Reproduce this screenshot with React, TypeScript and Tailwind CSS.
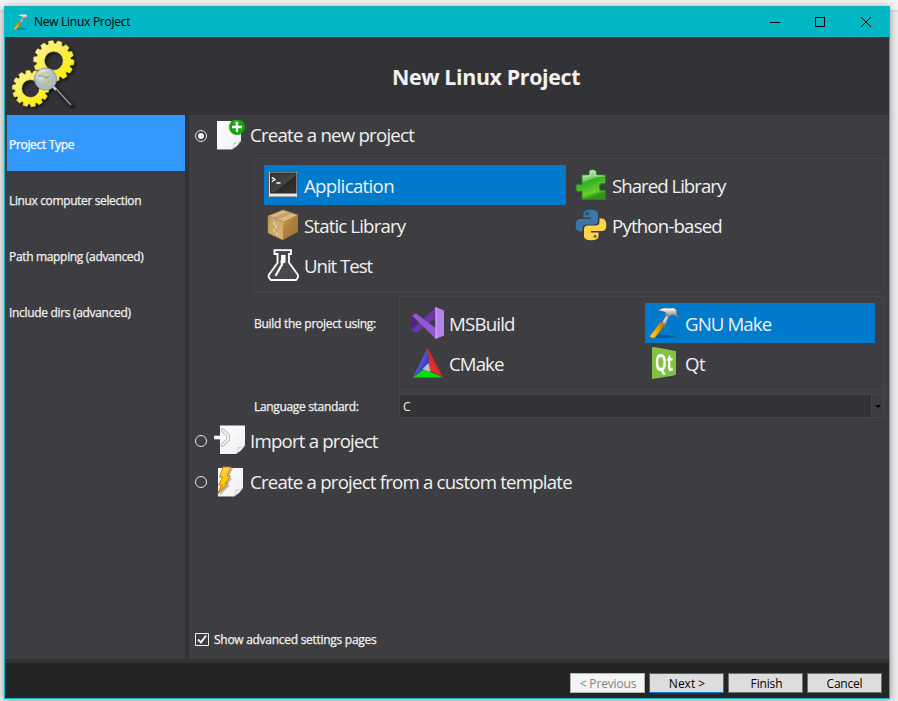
import React from "react";

type IconProps = { className?: string };

function Hammer({ className = "w-8 h-8" }: IconProps) {
  return (
    <svg viewBox="0 0 32 32" className={className}>
      <defs>
        <linearGradient id="hHandle" x1="0" x2="1"><stop offset="0" stopColor="#ffd640" /><stop offset="0.55" stopColor="#eda500" /><stop offset="1" stopColor="#976000" /></linearGradient>
        <linearGradient id="hHead" x1="0" y1="0" x2="0" y2="1"><stop offset="0" stopColor="#ffffff" /><stop offset="1" stopColor="#777" /></linearGradient>
      </defs>
      <path d="M4 31 12 27.5 29 29Q24 31.5 4 31Z" fill="#003460" opacity=".4" />
      <path d="M15.5 13 19 15 16 20 12.5 17.5Z" fill="#a5aaad" stroke="#666" strokeWidth=".4" />
      <path d="M12.2 15.5 17 18 7.2 30.5 Q5 32.5 1.5 29.5Z" fill="url(#hHandle)" stroke="#946400" strokeWidth=".5" />
      <path d="M14.5 14.5 18.5 7.5 21 9 17.5 16Z" fill="#d0d2d5" stroke="#666" strokeWidth=".4" />
      <path d="M10 3.5Q14 .2 19 1.2L26 1 28.5 3.2 28.6 7 31 10.2 28 9.2Q25 7 22.5 8.4L22 10 17.5 8.5 17.8 5.6Q14.5 3.8 10 3.5Z" fill="url(#hHead)" stroke="#666" strokeWidth=".5" />
      <path d="M13 2.8Q17 1.3 21 3L26 2.5" fill="none" stroke="#fff" strokeWidth=".9" />
    </svg>
  );
}

function gearPath(cx: number, cy: number, r: number, hole: number) {
  const n = 14;
  const pts: string[] = [];
  for (let i = 0; i < n; i++) {
    const a = (i * 2 * Math.PI) / n + 0.08;
    const at = (rr: number, d: number) =>
      `${(cx + rr * Math.cos(a + d)).toFixed(2)} ${(cy + rr * Math.sin(a + d)).toFixed(2)}`;
    pts.push(at(r * 0.84, -0.17), at(r, -0.11), at(r, 0.11), at(r * 0.84, 0.17));
  }
  return `M${pts.join("L")}ZM${cx - hole} ${cy}a${hole} ${hole} 0 1 0 ${2 * hole} 0a${hole} ${hole} 0 1 0 ${-2 * hole} 0Z`;
}

function GearsLogo() {
  return (
    <svg viewBox="0 0 72 72" className="h-[72px] w-[72px]">
      <defs>
        <linearGradient id="gear" x1="0" y1="0" x2=".8" y2="1"><stop offset="0" stopColor="#fff5a0" /><stop offset=".5" stopColor="#f8ef50" /><stop offset="1" stopColor="#ffed00" /></linearGradient>
        <radialGradient id="lens" cx=".35" cy=".25"><stop offset="0" stopColor="#eef0e5" /><stop offset="1" stopColor="#aabcc5" /></radialGradient>
        <filter id="gearShade"><feDropShadow dx="2" dy="2" stdDeviation="1.5" floodOpacity=".65" /></filter>
      </defs>
      <g filter="url(#gearShade)">
        <path d={gearPath(44.7, 23.8, 20.2, 9.5)} fill="url(#gear)" stroke="#efe45d" strokeWidth=".5" fillRule="evenodd" />
        <path d={gearPath(21.5, 51.5, 18.2, 9)} fill="url(#gear)" stroke="#efe45d" strokeWidth=".5" fillRule="evenodd" />
        <path d="M45 50 63 69.5" stroke="#282828" strokeWidth="4.5" />
        <path d="M44.5 49 62 68" stroke="#999" strokeWidth="1.3" />
        <path d="M42 47.5 47 53" stroke="#d2d2d2" strokeWidth="2" />
        <circle cx="36.5" cy="42" r="11" fill="url(#lens)" stroke="#8d989c" strokeWidth="1" />
        <path d="M29 37q8-5 12-1l-3 5 6 3-1 3q-7 3-10-3l3-4-6-1Z" fill="#c3c28b" opacity=".6" />
        <path d="M29 39h5l3 2 4-2" fill="none" stroke="#8c9ba1" strokeWidth="1.2" />
      </g>
    </svg>
  );
}

function PageSheet({ x = 1, w = 26 }: { x?: number; w?: number }) {
  const r = x + w;
  return (
    <g>
      <defs>
        <linearGradient id="paper" x1="0" y1="0" x2="1" y2="1"><stop offset="0" stopColor="#fff" /><stop offset=".8" stopColor="#f2f2f2" /><stop offset="1" stopColor="#ddd" /></linearGradient>
        <linearGradient id="curl" x1="0" y1="0" x2="1" y2="1"><stop offset="0" stopColor="#888" /><stop offset=".45" stopColor="#fff" /><stop offset="1" stopColor="#999" /></linearGradient>
      </defs>
      <path d={`M${x} 3H${r}V23L${r - 9} 31.5H${x}Z`} fill="#222" opacity=".4" />
      <path d={`M${x} 2H${r}V22L${r - 9} 30.5H${x}Z`} fill="url(#paper)" />
      <path d={`M${r - 9} 30.5Q${r - 6.5} 27 ${r - 7} 24Q${r - 3} 24.5 ${r} 22L${r - 4} 27Z`} fill="url(#curl)" stroke="#aaa" strokeWidth=".4" />
    </g>
  );
}

function NewPage() {
  return (
    <svg viewBox="0 0 32 32" className="h-8 w-8">
      <defs>
        <radialGradient id="plusGreen" cx=".45" cy=".25"><stop offset="0" stopColor="#54d449" /><stop offset=".5" stopColor="#159e12" /><stop offset="1" stopColor="#10a90e" /></radialGradient>
      </defs>
      <g transform="translate(0 -1)"><PageSheet x={3} w={24} /></g>
      <circle cx="23" cy="7" r="7.8" fill="url(#plusGreen)" stroke="#1e851b" strokeWidth=".5" />
      <path d="M23 2v10M18 7h10" stroke="#fff" strokeWidth="2.3" />
    </svg>
  );
}

function ImportPage() {
  return (
    <svg viewBox="0 1.5 32 32" className="h-8 w-8">
      <PageSheet x={6} w={25} />
      <path d="M8.5 6.5 14 12V16L8.5 21.5" fill="none" stroke="#aaa" strokeWidth="3.8" strokeLinecap="round" />
      <path d="M8.5 6.5 14 12V16L8.5 21.5" fill="none" stroke="#f2f2f2" strokeWidth="2.2" strokeLinecap="round" />
      <path d="M0 14H12" stroke="#fff" strokeWidth="3.6" />
    </svg>
  );
}

function TemplatePage() {
  return (
    <svg viewBox="0 0 32 32" className="h-8 w-8">
      <defs><linearGradient id="bolt" x1="0" y1="0" x2="0" y2="1"><stop offset="0" stopColor="#ffd34a" /><stop offset=".6" stopColor="#ffc600" /><stop offset="1" stopColor="#e87b00" /></linearGradient></defs>
      <PageSheet x={4} w={25} />
      <path d="M8.5 1.5H17L12 11H16.5L11 18H14L3 29.5 7 19.5H4L8 11H4.5Z" fill="#444" opacity=".35" transform="translate(2 1)" />
      <path d="M9 1H17L13 10H16.5L11 17.5H14L3.5 28.5 7.5 19H4.5L8.5 11H5.5Z" fill="url(#bolt)" stroke="#bf7208" strokeWidth=".8" />
    </svg>
  );
}

function TerminalIcon() {
  return (
    <svg viewBox="0 0 32 32" className="h-8 w-8">
      <defs>
        <linearGradient id="screen" x1="0" y1="0" x2="1" y2="1"><stop offset="0" stopColor="#333" /><stop offset=".55" stopColor="#444" /><stop offset=".57" stopColor="#292929" /><stop offset="1" stopColor="#333" /></linearGradient>
        <linearGradient id="frame" x1="0" y1="0" x2="0" y2="1"><stop offset="0" stopColor="#c9c9c9" /><stop offset="1" stopColor="#eee" /></linearGradient>
      </defs>
      <rect x="1.5" y="2.5" width="29" height="26" rx="1" fill="url(#frame)" stroke="#5a5a5a" />
      <rect x="3.5" y="4" width="25.5" height="20" fill="url(#screen)" stroke="#292929" />
      <path d="M2.5 27.5h27" stroke="#a4a4a4" />
      <path d="M4.8 8.4 8 10.6 4.8 12.8M9.4 14H13.5" fill="none" stroke="#fff" strokeWidth="1.3" />
    </svg>
  );
}

function BoxIcon() {
  return (
    <svg viewBox="0 0 32 32" className="h-8 w-8">
      <defs>
        <linearGradient id="boxLeft" x1="0" y1="0" x2="1" y2="1"><stop offset="0" stopColor="#c59a57" /><stop offset="1" stopColor="#dcb775" /></linearGradient>
        <linearGradient id="boxRight" x1="0" y1="0" x2="1" y2="1"><stop offset="0" stopColor="#c49650" /><stop offset="1" stopColor="#986a2e" /></linearGradient>
      </defs>
      <path d="M1 7 16 1 31 6 17 13Z" fill="#dcb87c" stroke="#b9894a" strokeWidth=".5" />
      <path d="M1 7 17 13 16 31 1 24Z" fill="url(#boxLeft)" stroke="#b98b4b" strokeWidth=".5" />
      <path d="M17 13 31 6V23L16 31Z" fill="url(#boxRight)" />
      <path d="m7 9 16-6M8.5 10 25 4" stroke="#aa8553" strokeWidth=".7" />
      <path d="M5.5 9 10 11V14L11 24 8 26 7 15 5 14Z" fill="#bfae86" />
      <path d="M7 13v3m2 0v3m-2 1v3m3 0v3" stroke="#eee2c8" />
    </svg>
  );
}

function FlaskIcon() {
  return (
    <svg viewBox="0 0 32 32" className="h-8 w-8">
      <path d="M7.5 1.2H24V5H22V13.5L31 26V28.5L29 31H4L1.7 28.5V26L10.5 14V5H7.5Z" fill="#49494c" stroke="#fff" strokeWidth="1.8" />
      <path d="M14.5 12 15 15.5 9 26" fill="none" stroke="#fff" strokeWidth="2.2" strokeLinecap="round" />
      <path d="M14 6h4.5v7.5L14 15.5Z" fill="#fff" />
    </svg>
  );
}

function PuzzleIcon() {
  return (
    <svg viewBox="0 0 32 32" className="h-8 w-8">
      <defs><linearGradient id="puzzle" x1="0" y1="0" x2=".35" y2="1"><stop offset="0" stopColor="#c7f0bd" /><stop offset=".4" stopColor="#7bd471" /><stop offset=".48" stopColor="#34ad26" /><stop offset=".85" stopColor="#66d12b" /><stop offset="1" stopColor="#319217" /></linearGradient></defs>
      <path d="M7 6H12.5Q15.5 6 14 3.5Q13.5 .8 17.5 .7T21.5 3.5Q20 6 23 6H30.5V13.5Q30 15.5 27.5 14.5Q24 14.5 24.5 18Q24 22 27.5 21.5 30.5 20 30.5 23V30.5H7V23Q6.5 21 4.5 22.5 1 23.5 1 18.5 1 13.5 5 15.5 7 16.5 7 14Z" fill="url(#puzzle)" stroke="#25861c" strokeWidth=".9" />
      <path d="M8 7H14Q16.5 6 15.5 3.5Q15.5 1.7 17.5 1.7T20 3.7Q19.5 7 22 7H29" fill="none" stroke="#e9ffe5" strokeWidth=".8" opacity=".8" />
    </svg>
  );
}

function PythonIcon() {
  return (
    <svg viewBox="0 0 32 32" className="h-8 w-8">
      <path d="M15.7.7Q8.5.7 8.5 5V8.5H16V10H5Q.7 10 .7 16T5 22.5H7.5V19Q7.5 15.5 11.5 15.5H19Q23 15.5 23 11.7V5Q23 .7 15.7.7Z" fill="#3977ab" />
      <circle cx="12" cy="4.7" r="1.5" fill="#28465c" />
      <path d="M16.3 31.3Q23.5 31.3 23.5 27V23.5H16V22H27Q31.3 22 31.3 16T27 9.5H24.5V13Q24.5 16.5 20.5 16.5H13Q9 16.5 9 20.3V27Q9 31.3 16.3 31.3Z" fill="#ffd447" />
      <circle cx="20" cy="27.3" r="1.5" fill="#70602e" />
    </svg>
  );
}

function VisualStudioIcon() {
  return (
    <svg viewBox="0 0 32 32" className="h-8 w-8">
      <path d="M0 8.5 4 11V21L0 24Z" fill="#52218a" />
      <path d="M0 24V22.5L24 0V11L4 26Z" fill="#6b35aa" />
      <path d="M0 8.5 4 6.5 24 21.5V32Z" fill="#9358d2" />
      <path d="M23.5 0 32 3.5V28.5L23.5 32Z" fill="#b782ef" />
      <path d="M23.5 0 24.8.5V31.5L23.5 32Z" fill="#ca9ffb" />
    </svg>
  );
}

function CMakeIcon() {
  return (
    <svg viewBox="0 0 32 32" className="h-8 w-8">
      <defs>
        <linearGradient id="cRed" x1="0" y1="1" x2="1" y2="0"><stop stopColor="#ff4343" /><stop offset="1" stopColor="#a90909" /></linearGradient>
        <linearGradient id="cBlue" x1="0" y1="0" x2="1" y2="1"><stop stopColor="#8a8aff" /><stop offset="1" stopColor="#1919b0" /></linearGradient>
      </defs>
      <path d="M15.5 1 17 17 1 30Z" fill="url(#cBlue)" />
      <path d="M16 1 31 30.5 17.5 23Z" fill="url(#cRed)" />
      <path d="M1 30.5 12 22 31 30.5Z" fill="#08dc12" />
      <path d="M16.5 16 18.5 25 10.5 22Z" fill="#bec0c4" />
    </svg>
  );
}

function QtIcon() {
  return (
    <div className="relative h-8 w-8">
      <svg viewBox="-1 0 32 32" className="h-8 w-8"><path d="M3 1Q3 0 5 0L27 4V26Q27 28 25 28.5L3 32Z" fill="#80c342" /></svg>
      <span className="absolute left-[7px] top-[3px] origin-left scale-x-[.7] scale-y-[1.1] font-['Open_Sans'] text-[21px] font-bold leading-[24px] text-white">Qt</span>
    </div>
  );
}

function Option({ icon, label, selected = false, tracking }: { icon: React.ReactNode; label: string; selected?: boolean; tracking: string }) {
  return (
    <div className={`flex h-10 items-center pl-[3px] ${selected ? "bg-[#007acc]" : ""}`}>
      {icon}
      <span className={`ml-[5px] whitespace-nowrap pt-px text-[18.67px] leading-6 ${tracking}`}>{label}</span>
    </div>
  );
}

function RadioRow({ icon, label, checked = false, tracking }: { icon: React.ReactNode; label: string; checked?: boolean; tracking: string }) {
  return (
    <div className="flex h-[41px] items-center pl-[6px]">
      <span className="flex h-3 w-3 items-center justify-center rounded-full border border-[#e5e5e5]">
        {checked && <span className="h-[6px] w-[6px] rounded-full bg-[#eeeeee]" />}
      </span>
      <span className="ml-[7px]">{icon}</span>
      <span className={`ml-[4px] whitespace-nowrap text-[18.67px] leading-6 ${tracking}`}>{label}</span>
    </div>
  );
}

function Caption() {
  return (
    <header className="flex h-[30px] shrink-0 items-center bg-[#00b7c3] pl-2 text-black">
      <Hammer className="h-4 w-4" />
      <span className="ml-[5px] text-[12px] font-normal tracking-[-0.27px]">New Linux Project</span>
      <svg viewBox="0 0 104 12" className="ml-auto mr-[16px] h-3 w-[104px]" fill="none" stroke="#000" shapeRendering="crispEdges">
        <path d="M1 6.5h10M46.5 1.5h9v9h-9Z" />
        <path d="m92 1 10 10m0-10L92 11" shapeRendering="auto" />
      </svg>
    </header>
  );
}

const pages = [
  { label: "Project Type", tracking: "tracking-[-0.32px]" },
  { label: "Linux computer selection", tracking: "tracking-[-0.37px]" },
  { label: "Path mapping (advanced)", tracking: "tracking-[-0.33px]" },
  { label: "Include dirs (advanced)", tracking: "tracking-[-0.32px]" },
];

export default function App() {
  return (
    <div className="h-[701px] w-[898px] overflow-hidden bg-[#eeeeee] bg-[linear-gradient(#f5f5f5_0px,#f5f5f5_10px,#dedede_10px,#dedede_12px,#eeeeee_12px)] pl-1 pt-[6px] font-['Open_Sans','Noto_Sans',sans-serif] text-[12px] text-[#f1f1f1]">
      <div className="flex h-[693px] w-[886px] flex-col border border-[#12b5c0] bg-[#333337] shadow-[0_1px_8px_rgba(0,0,0,0.4)]">
        <Caption />
        <div className="flex h-[78px] shrink-0 items-start">
          <div className="w-[96px] pl-[4px] pt-0"><GearsLogo /></div>
          <h1 className="mr-[18px] flex-1 pt-[25px] text-center text-[21.33px] font-bold leading-[30px] tracking-[-0.33px]">New Linux Project</h1>
        </div>
        <main className="flex h-[544px] shrink-0 gap-1">
          <nav className="w-[180px] bg-[#3e3e42] pl-[2px] [-webkit-text-stroke:0.25px]">
            {pages.map((page, i) => (
              <div key={page.label} className={`flex h-14 items-center whitespace-nowrap pl-[2px] pt-[3px] ${page.tracking} ${i === 0 ? "bg-[#3399ff] text-white" : ""}`}>{page.label}</div>
            ))}
          </nav>
          <section className="flex min-w-0 flex-1 flex-col bg-[#3e3e42]">
            <RadioRow icon={<NewPage />} label="Create a new project" checked tracking="tracking-[-0.78px] pb-px" />
            <div className="ml-[65px] mt-[2px] grid h-[134px] w-[630px] grid-cols-[302px_302px] content-start gap-x-[6px] border border-[#46464a] pl-[9px] pt-[6px]">
              <Option icon={<TerminalIcon />} label="Application" selected tracking="tracking-[-0.68px]" />
              <Option icon={<PuzzleIcon />} label="Shared Library" tracking="tracking-[-1px]" />
              <Option icon={<BoxIcon />} label="Static Library" tracking="tracking-[-0.86px]" />
              <Option icon={<PythonIcon />} label="Python-based" tracking="tracking-[-0.83px]" />
              <Option icon={<FlaskIcon />} label="Unit Test" tracking="tracking-[-1.05px]" />
            </div>
            <div className="ml-[65px] mt-1 flex h-[94px]">
              <span className="w-[145px] whitespace-nowrap pt-[19px] tracking-[-0.28px] [-webkit-text-stroke:0.25px]">Build the project using:</span>
              <div className="grid w-[485px] grid-cols-[230px_230px] content-start gap-x-[6px] border border-[#46464a] pl-[9px] pt-[6px]">
                <Option icon={<VisualStudioIcon />} label="MSBuild" tracking="tracking-[-0.8px]" />
                <Option icon={<Hammer />} label="GNU Make" selected tracking="tracking-[-0.9px]" />
                <Option icon={<CMakeIcon />} label="CMake" tracking="tracking-[-0.95px]" />
                <Option icon={<QtIcon />} label="Qt" tracking="tracking-[-0.5px]" />
              </div>
            </div>
            <div className="ml-[65px] mt-1 flex h-6">
              <span className="w-[145px] whitespace-nowrap pt-[4px] tracking-[-0.33px] [-webkit-text-stroke:0.25px]">Language standard:</span>
              <div className="flex w-[485px] items-center border border-[#46464a] bg-[#333337] pl-[3px]">
                <span className="pt-[2px]">C</span>
                <span className="ml-auto flex h-full w-[12px] items-center justify-center border-l border-[#46464a] bg-[#3e3e42]">
                  <svg viewBox="0 0 6 3" className="h-[3px] w-[6px]"><path d="M0 0h6L3 3Z" fill="#000" /></svg>
                </span>
              </div>
            </div>
            <div className="mt-[2px]">
              <RadioRow icon={<ImportPage />} label="Import a project" tracking="tracking-[-0.8px]" />
              <RadioRow icon={<TemplatePage />} label="Create a project from a custom template" tracking="tracking-[-0.8px]" />
            </div>
            <label className="mb-[10px] ml-[6px] mt-auto flex items-center">
              <svg viewBox="0 0 14 13" className="h-[13px] w-[14px]" fill="none" stroke="#f1f1f1"><path d="M.5.5h13v12H.5Z" /><path d="m3 6.5 3 3 5-7" strokeWidth="2" /></svg>
              <span className="ml-[5px] pt-px tracking-[-0.28px] [-webkit-text-stroke:0.25px]">Show advanced settings pages</span>
            </label>
          </section>
        </main>
        <footer className="mt-1 flex flex-1 items-start justify-end gap-1 bg-[#252526] pr-[7px] pt-[10px] text-black">
          <button className="h-5 w-[75px] border border-[#adb2b5] bg-[#f4f4f4] pl-px pt-px leading-[17px] text-[#838383] tracking-[-0.15px]">&lt; Previous</button>
          <button className="h-5 w-[75px] border border-[#0078d7] bg-[#dddddd] pl-px pt-px leading-[17px]">Next &gt;</button>
          <button className="h-5 w-[75px] border border-[#707070] bg-[#dddddd] pl-[2px] pt-px leading-[17px] tracking-[-0.15px]">Finish</button>
          <button className="h-5 w-[75px] border border-[#707070] bg-[#dddddd] pt-px leading-[17px] tracking-[-0.2px]">Cancel</button>
        </footer>
      </div>
    </div>
  );
}
